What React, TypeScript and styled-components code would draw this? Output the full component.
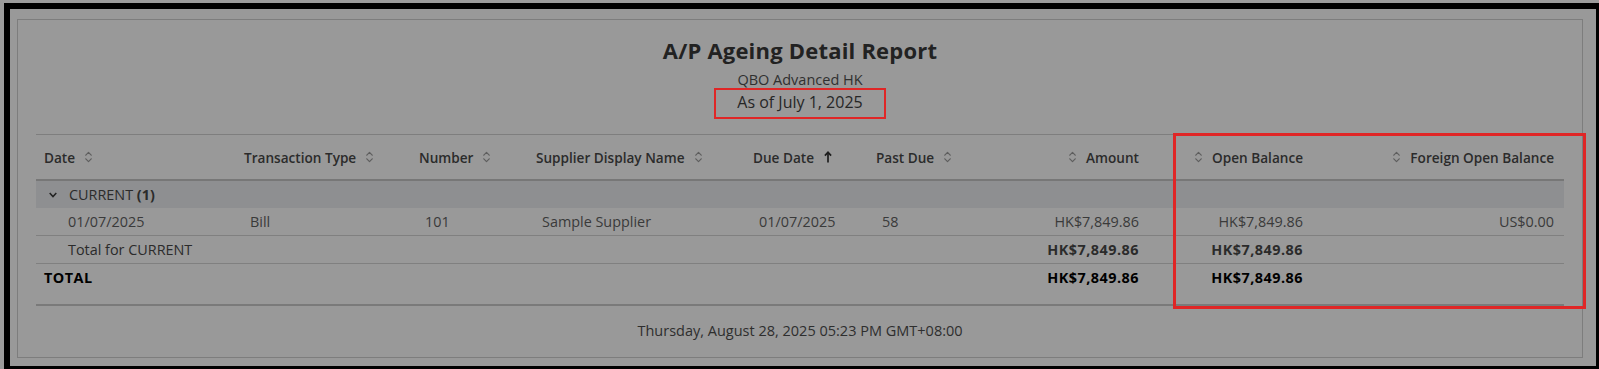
import React from "react";
import styled, { createGlobalStyle } from "styled-components";

const GlobalStyle = createGlobalStyle`
  html, body {
    margin: 0;
    padding: 0;
    background: #9c9c9c;
    overflow: hidden;
    font-family: "Open Sans", Lato, Arial, sans-serif;
  }
`;

const COLS = "200px 175px 117px 217px 123px 132px 147px 164px 253px";

const Page = styled.div`
  padding: 3px 0 0 4px;
  width: 1599px;
  height: 369px;
  box-sizing: border-box;
`;

const Frame = styled.div`
  width: 1598px;
  height: 369px;
  box-sizing: border-box;
  border: 6px solid #000;
  background: #999999;
  padding: 10px 13px 8px 7px;
`;

const Panel = styled.div`
  position: relative;
  height: 339px;
  box-sizing: border-box;
  border: 1px solid #7d7d7d;
  padding: 17px 18px 0 18px;
  display: flex;
  flex-direction: column;
`;

const Heading = styled.div`
  display: flex;
  flex-direction: column;
  align-items: center;
`;

const Title = styled.h1`
  margin: 0;
  font-size: 22px;
  line-height: 27px;
  font-weight: 700;
  letter-spacing: 0.2px;
  color: #222;
`;

const Company = styled.div`
  margin-top: 7px;
  font-size: 14.5px;
  line-height: 17px;
  color: #303030;
`;

const AsOf = styled.div`
  border: 2px solid #e02626;
  padding: 2px 21px 5px 21px;
  font-size: 16px;
  line-height: 20px;
  color: #262626;
`;

const Table = styled.div`
  margin-top: 15px;
  border-top: 1px solid #7e7e7e;
  border-bottom: 2px solid #7a7a7a;
`;

const Row = styled.div<{ $h: number; $bg?: string; $line?: string; $pb?: number }>`
  display: grid;
  grid-template-columns: ${COLS};
  height: ${(p) => p.$h}px;
  box-sizing: content-box;
  padding-bottom: ${(p) => p.$pb ?? 0}px;
  background: ${(p) => p.$bg ?? "transparent"};
  border-bottom: ${(p) => p.$line ?? "none"};
  align-items: center;
`;

const HeadCell = styled.div<{ $right?: boolean }>`
  display: flex;
  align-items: center;
  justify-content: ${(p) => (p.$right ? "flex-end" : "flex-start")};
  gap: 10px;
  padding: 0 ${(p) => (p.$right ? 8 : 0)}px 0 8px;
  font-size: 13.6px;
  font-weight: 600;
  color: #2b2b2b;
  white-space: nowrap;
  &:last-child {
    padding-right: 10px;
  }
`;

const Cell = styled.div<{ $right?: boolean; $indent?: number; $weight?: number; $color?: string }>`
  text-align: ${(p) => (p.$right ? "right" : "left")};
  padding: 0 8px 0 ${(p) => p.$indent ?? 14}px;
  font-size: 14.4px;
  font-weight: ${(p) => p.$weight ?? 400};
  letter-spacing: ${(p) => ((p.$weight ?? 400) >= 700 ? "0.5px" : "0")};
  color: ${(p) => p.$color ?? "#3a3a3a"};
  white-space: nowrap;
  &:last-child {
    padding-right: 10px;
  }
`;

const GroupCell = styled.div`
  grid-column: 1 / -1;
  display: flex;
  align-items: center;
  gap: 12px;
  padding-left: 13px;
  font-size: 14.4px;
  font-weight: 500;
  color: #2b2b2b;
`;

const Bold = styled.span`
  font-weight: 700;
`;

const Footer = styled.div`
  margin-top: 16px;
  text-align: center;
  font-size: 14.5px;
  line-height: 18px;
  color: #2e2e2e;
`;

const Highlight = styled.div`
  position: absolute;
  left: 1155px;
  top: 113px;
  width: 413px;
  height: 176px;
  box-sizing: border-box;
  border: 3px solid #e02626;
  pointer-events: none;
`;

const SortIcon = () => (
  <svg width="7" height="12" viewBox="0 0 7 12" fill="none">
    <path d="M0.8 4.2 L3.5 1.4 L6.2 4.2" stroke="#5e5e5e" strokeWidth="1.2" strokeLinecap="round" strokeLinejoin="round" />
    <path d="M0.8 7.8 L3.5 10.6 L6.2 7.8" stroke="#5e5e5e" strokeWidth="1.2" strokeLinecap="round" strokeLinejoin="round" />
  </svg>
);

const UpArrow = () => (
  <svg width="8" height="12" viewBox="0 0 8 12" fill="none">
    <path d="M4 11.5 V1.5" stroke="#1e1e1e" strokeWidth="1.7" />
    <path d="M0.9 4.6 L4 1.3 L7.1 4.6" stroke="#1e1e1e" strokeWidth="1.7" strokeLinejoin="miter" />
  </svg>
);

const Chevron = () => (
  <svg width="8" height="6" viewBox="0 0 8 6" fill="none">
    <path d="M0.7 1 L4 4.6 L7.3 1" stroke="#222" strokeWidth="1.5" />
  </svg>
);

type Head = { label: string; right?: boolean; sort?: "both" | "up" };

const heads: Head[] = [
  { label: "Date", sort: "both" },
  { label: "Transaction Type", sort: "both" },
  { label: "Number", sort: "both" },
  { label: "Supplier Display Name", sort: "both" },
  { label: "Due Date", sort: "up" },
  { label: "Past Due", sort: "both" },
  { label: "Amount", right: true, sort: "both" },
  { label: "Open Balance", right: true, sort: "both" },
  { label: "Foreign Open Balance", right: true, sort: "both" },
];

const LINE = "1px solid #808080";

export default function App() {
  return (
    <>
      <GlobalStyle />
      <Page>
        <Frame>
          <Panel>
            <Heading>
              <Title>A/P Ageing Detail Report</Title>
              <Company>QBO Advanced HK</Company>
              <AsOf>As of July 1, 2025</AsOf>
            </Heading>
            <Table>
              <Row $h={44} $line="2px solid #777">
                {heads.map((h) => (
                  <HeadCell key={h.label} $right={h.right}>
                    {h.right && <SortIcon />}
                    <span>{h.label}</span>
                    {!h.right && (h.sort === "up" ? <UpArrow /> : <SortIcon />)}
                  </HeadCell>
                ))}
              </Row>
              <Row $h={27} $bg="#8e8f91">
                <GroupCell>
                  <Chevron />
                  <span>
                    CURRENT <Bold>(1)</Bold>
                  </span>
                </GroupCell>
              </Row>
              <Row $h={27} $line={LINE}>
                <Cell $indent={32}>01/07/2025</Cell>
                <Cell>Bill</Cell>
                <Cell>101</Cell>
                <Cell>Sample Supplier</Cell>
                <Cell>01/07/2025</Cell>
                <Cell>58</Cell>
                <Cell $right>HK$7,849.86</Cell>
                <Cell $right>HK$7,849.86</Cell>
                <Cell $right>US$0.00</Cell>
              </Row>
              <Row $h={27} $line={LINE}>
                <Cell $indent={32} $weight={500} $color="#2b2b2b">Total for CURRENT</Cell>
                <Cell />
                <Cell />
                <Cell />
                <Cell />
                <Cell />
                <Cell $right $weight={700} $color="#2b2b2b">HK$7,849.86</Cell>
                <Cell $right $weight={700} $color="#2b2b2b">HK$7,849.86</Cell>
                <Cell $right />
              </Row>
              <Row $h={26} $pb={14}>
                <Cell $indent={8} $weight={700} $color="#000">TOTAL</Cell>
                <Cell />
                <Cell />
                <Cell />
                <Cell />
                <Cell />
                <Cell $right $weight={700} $color="#000">HK$7,849.86</Cell>
                <Cell $right $weight={700} $color="#000">HK$7,849.86</Cell>
                <Cell $right />
              </Row>
            </Table>
            <Footer>Thursday, August 28, 2025 05:23 PM GMT+08:00</Footer>
            <Highlight />
          </Panel>
        </Frame>
      </Page>
    </>
  );
}
